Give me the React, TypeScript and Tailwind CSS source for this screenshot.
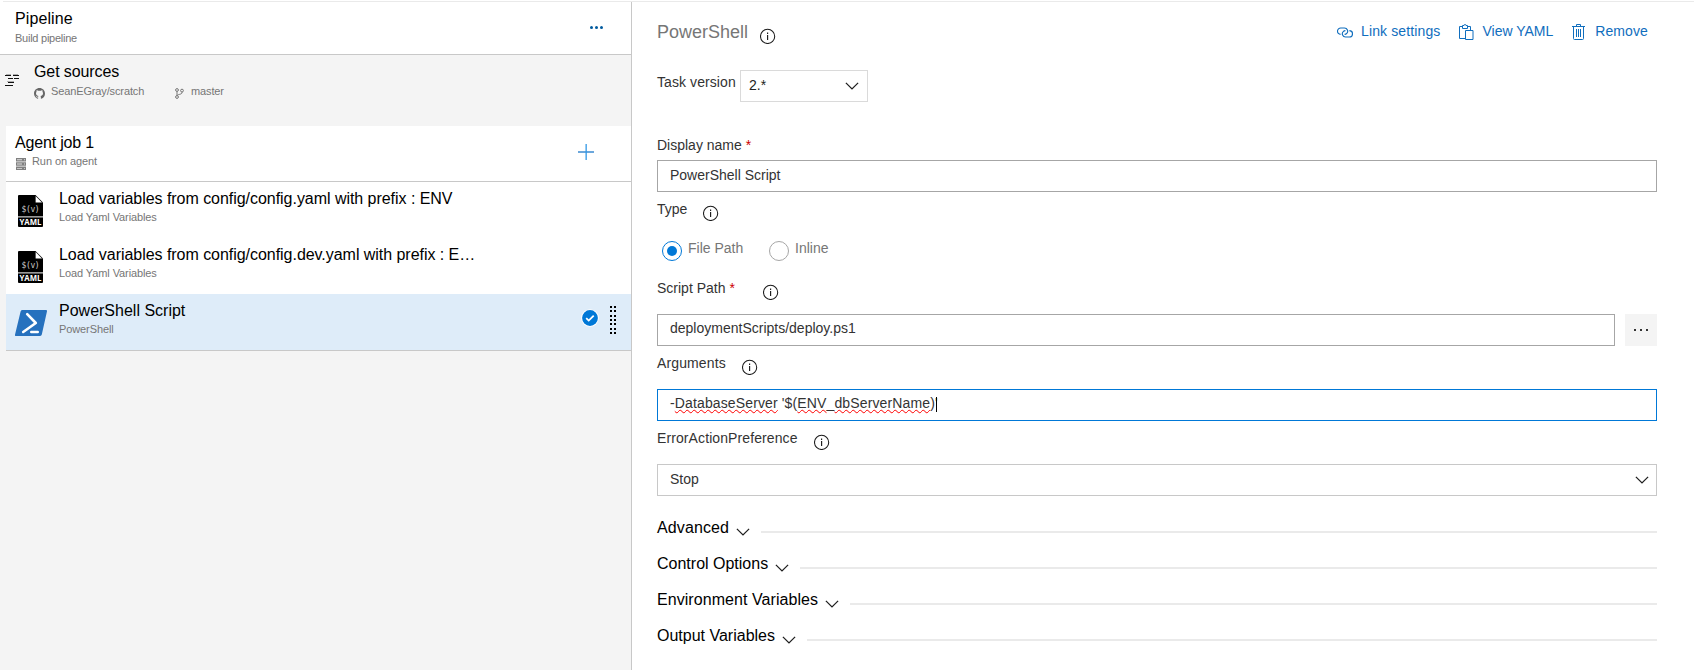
import React from "react";

const InfoIcon = ({ className = "" }: { className?: string }) => (
  <svg className={`h-4 w-4 shrink-0 ${className}`} viewBox="0 0 16 16" fill="none" stroke="#1a1a1a" strokeWidth="1.05">
    <circle cx="7.6" cy="8.4" r="7.1" />
    <path d="M7.600 7v5" strokeWidth="1.15" />
    <path d="M7.600 4.600v1.400" strokeWidth="1.15" />
  </svg>
);

const Chevron = ({ className = "" }: { className?: string }) => (
  <svg className={`h-[8px] w-[14px] shrink-0 ${className}`} viewBox="0 0 14 8" fill="none" stroke="#1f1f1f" strokeWidth="1.3">
    <path d="M0.9 0.9 7 6.9 13.1 0.9" />
  </svg>
);

const SourcesIcon = () => (
  <svg className="mt-[19px] ml-[5px] h-3 w-[14px] shrink-0" viewBox="0 0 14 12" fill="#111">
    <path d="M0 1h6v1H0zM8 1h6v1H8zM3 4h5v1H3zM9 4h5v1H9zM3 8h6v1H3zM0 11h8v1H0z" />
    <path d="M1 0h5v1H1zM8 0h5v1H8zM2 7h7v1H2z" opacity=".3" />
  </svg>
);

const GithubIcon = () => (
  <svg className="mt-[5px] h-[11px] w-[11px] shrink-0" viewBox="0 0 16 16" fill="#666">
    <path d="M8 0C3.58 0 0 3.58 0 8c0 3.54 2.29 6.53 5.47 7.59.4.07.55-.17.55-.38 0-.19-.01-.82-.01-1.49-2.01.37-2.53-.49-2.69-.94-.09-.23-.48-.94-.82-1.13-.28-.15-.68-.52-.01-.53.63-.01 1.08.58 1.23.82.72 1.21 1.87.87 2.33.66.07-.52.28-.87.51-1.07-1.78-.2-3.64-.89-3.64-3.95 0-.87.31-1.59.82-2.15-.08-.2-.36-1.02.08-2.12 0 0 .67-.21 2.2.82.64-.18 1.32-.27 2-.27s1.36.09 2 .27c1.53-1.04 2.2-.82 2.2-.82.44 1.1.16 1.92.08 2.12.51.56.82 1.27.82 2.15 0 3.07-1.87 3.75-3.65 3.95.29.25.54.73.54 1.48 0 1.07-.01 1.93-.01 2.2 0 .21.15.46.55.38A8.01 8.01 0 0 0 16 8c0-4.42-3.58-8-8-8Z" />
  </svg>
);

const BranchIcon = () => (
  <svg className="mt-[5px] h-[11px] w-[9px] shrink-0" viewBox="0 0 9 11" fill="none" stroke="#777" strokeWidth="1">
    <circle cx="2" cy="2" r="1.4" />
    <circle cx="7" cy="2.6" r="1.4" />
    <circle cx="2" cy="9" r="1.4" />
    <path d="M2 3.4v4.2M7 4v.6C7 6 5 6.2 3.6 6.6 2.6 6.9 2.2 7.2 2 7.6" />
  </svg>
);

const ServerIcon = () => (
  <svg className="mt-[5px] ml-px h-3 w-[10px] shrink-0" viewBox="0 0 10 12">
    <path fill="#808080" d="M0 0h10v3.4H0zM0 4.3h10v3.4H0zM0 8.6h10V12H0z" />
    <path fill="#ddd" d="M1 1.3h5v.9H1zM1 5.6h5v.9H1zM1 9.9h5v.9H1zM8 1.3h1v.9H8zM8 5.6h1v.9H8zM8 9.9h1v.9H8z" />
  </svg>
);

const YamlIcon = () => (
  <svg className="mt-[13px] ml-3 h-8 w-[25px] shrink-0" viewBox="0 0 25 32">
    <path fill="#000" d="M1 0h16.5L25 7.5V21H0V1a1 1 0 0 1 1-1Z" />
    <path fill="#fff" d="M17.6 1v6.4H24z" />
    <path fill="#999" d="M0 21h25v1.6H0z" />
    <path fill="#000" d="M0 22.6h25V31a1 1 0 0 1-1 1H1a1 1 0 0 1-1-1z" />
    <text x="12.6" y="16.8" textAnchor="middle" fontSize="8" fill="#ccc" fontFamily="DejaVu Sans Mono, monospace" textLength="18">$(v)</text>
    <text x="12.5" y="30.2" textAnchor="middle" fontSize="8.6" fontWeight="bold" fill="#fff" fontFamily="Open Sans, sans-serif" textLength="22" lengthAdjust="spacingAndGlyphs">YAML</text>
  </svg>
);

const PowerShellIcon = () => (
  <svg className="mt-4 ml-[9px] h-[26px] w-8 shrink-0" viewBox="0 0 32 26">
    <path fill="#2671be" d="M7.6 0H31q1.3 0 1 1.3L26.8 24.6q-.3 1.4-1.7 1.4H1q-1.3 0-1-1.3L5.6 1.4Q6 0 7.6 0Z" />
    <path d="M12.2 4.2 20.8 13 8.2 22" fill="none" stroke="#fff" strokeWidth="2.6" strokeLinecap="round" strokeLinejoin="round" />
    <path d="M16.2 22h6.6" stroke="#fff" strokeWidth="2.4" strokeLinecap="round" />
  </svg>
);

const CheckBadge = () => (
  <svg className="mt-[15px] h-[18px] w-[18px] shrink-0" viewBox="0 0 18 18">
    <circle cx="9" cy="9" r="8.8" fill="#fff" />
    <circle cx="9" cy="9" r="7.9" fill="#0078d7" />
    <path d="m5.2 9.2 2.5 2.4 5-5" fill="none" stroke="#fff" strokeWidth="1.8" />
  </svg>
);

const DragHandle = () => (
  <svg className="mt-3 mr-[14px] ml-[11px] h-7 w-[7px] shrink-0" viewBox="0 0 7 28" fill="#000">
    {[0, 4, 9, 13, 17, 22, 26].map((y) => (
      <g key={y}>
        <rect x="0" y={y} width="2" height="2" />
        <rect x="4" y={y} width="2" height="2" />
      </g>
    ))}
  </svg>
);

const LinkIcon = () => (
  <svg className="mt-[6px] h-[11px] w-4 shrink-0" viewBox="0 0 16 11" fill="none" stroke="#106ebe" strokeWidth="1.15">
    <path d="M3.600 7.400A3.200 3.200 0 0 1 3.800 1h3.700a3.200 3.200 0 0 1 2.300 5.400Q8.900 7.400 7.600 7.400" />
    <path d="M12.400 3.600a3.200 3.200 0 0 1-.2 6.400H8.500a3.200 3.200 0 0 1-2.300-5.400Q7.100 3.600 8.400 3.600" />
  </svg>
);

const ClipboardIcon = () => (
  <svg className="mt-[3px] ml-[19px] h-4 w-[15px] shrink-0" viewBox="0 0 15 16" fill="none" stroke="#106ebe" strokeWidth="1">
    <path d="M6 14.500H.5v-12H3M9 2.500h2.500V6M3.500 4.500v-3h1.500a1 1 0 0 1 2 0h1.500v3z" />
    <path d="M6.500 6.500h7.500v9H6.500z" />
  </svg>
);

const TrashIcon = () => (
  <svg className="mt-[3px] ml-[19px] h-4 w-[13px] shrink-0" viewBox="0 0 13 16" fill="none" stroke="#106ebe" strokeWidth="1">
    <path d="M0 2.500h13M4.500 2.500v-2h4v2M1.500 2.500v12q0 1 1 1h8q1 0 1-1v-12M4.500 5v8M6.500 5v8M8.500 5v8" />
  </svg>
);

const title = "text-[16px] leading-5 whitespace-nowrap text-black";
const sub = "text-[11px] leading-4 whitespace-nowrap text-[#767676]";
const misspelt = "decoration-[#f00] decoration-wavy decoration-1";

function Task({ icon, name, type, selected }: { icon: React.ReactNode; name: string; type: string; selected?: boolean }) {
  return (
    <div className={`flex h-14 ${selected ? "bg-[#deecf9]" : "bg-white"}`}>
      <div className="w-[53px] shrink-0">{icon}</div>
      <div className="w-[420px] pt-[7px]">
        <div className={`${title} ${selected ? "tracking-normal" : "tracking-[-0.04px]"}`}>{name}</div>
        <div className={`${sub} tracking-[-0.1px]`}>{type}</div>
      </div>
      {selected && (
        <div className="ml-auto flex">
          <CheckBadge />
          <DragHandle />
        </div>
      )}
    </div>
  );
}

const Section = ({ name, tracking }: { name: string; tracking: string }) => (
  <div className="flex h-9">
    <span className={`${title} ${tracking}`}>{name}</span>
    <Chevron className="mt-[10px] ml-[7px]" />
    <div className="mt-[13px] ml-[11px] h-[2px] flex-1 bg-[#eaeaea]" />
  </div>
);

export default function App() {
  return (
    <div className="flex h-[670px] w-[1694px] flex-col overflow-hidden bg-white font-['Liberation_Sans',Arial,sans-serif] text-[14px] leading-5 text-[#333]">
      <div className="mt-px ml-[3px] h-px shrink-0 bg-[#eaeaea]" />
      <div className="flex flex-1">
        <aside className="flex w-[632px] shrink-0 flex-col border-r border-[#c8c8c8] bg-[#f4f4f4]">
          <div className="flex h-[53px] justify-between border-b border-[#c8c8c8] bg-white pt-[7px] pl-[15px]">
            <div>
              <div className={`${title} tracking-[0.1px]`}>Pipeline</div>
              <div className={`${sub} mt-px tracking-[-0.25px]`}>Build pipeline</div>
            </div>
            <svg className="mt-[17px] mr-7 h-[3px] w-[13px]" viewBox="0 0 13 3" fill="#005a9e">
              <circle cx="1.500" cy="1.500" r="1.500" />
              <circle cx="6.500" cy="1.500" r="1.500" />
              <circle cx="11.500" cy="1.500" r="1.500" />
            </svg>
          </div>
          <div className="flex h-[71px]">
            <SourcesIcon />
            <div className="ml-[15px] pt-[7px]">
              <div className={`${title} tracking-[-0.1px]`}>Get sources</div>
              <div className={`${sub} mt-px flex tracking-[-0.13px]`}>
                <GithubIcon />
                <span className="ml-[6px] w-[124px]">SeanEGray/scratch</span>
                <BranchIcon />
                <span className="ml-[7px]">master</span>
              </div>
            </div>
          </div>
          <div className="ml-[6px] border-b border-[#c8c8c8]">
            <div className="flex h-14 justify-between border-b border-[#c8c8c8] bg-white pt-[7px] pl-[9px]">
              <div>
                <div className={`${title} tracking-[-0.18px]`}>Agent job 1</div>
                <div className={`${sub} flex tracking-[-0.08px]`}>
                  <ServerIcon />
                  <span className="ml-[6px]">Run on agent</span>
                </div>
              </div>
              <svg className="mt-[11px] mr-[37px] h-4 w-4" viewBox="0 0 16 16">
                <path fill="#6ba7dc" d="M0 7h16v2H0z" />
                <path fill="#3097e5" d="M7.500 0h1.300v16H7.500z" />
              </svg>
            </div>
            <Task icon={<YamlIcon />} name="Load variables from config/config.yaml with prefix : ENV" type="Load Yaml Variables" />
            <Task icon={<YamlIcon />} name="Load variables from config/config.dev.yaml with prefix : E…" type="Load Yaml Variables" />
            <Task icon={<PowerShellIcon />} name="PowerShell Script" type="PowerShell" selected />
          </div>
        </aside>

        <main className="flex w-[1025px] flex-col pl-[25px]">
          <header className="flex h-[68px] justify-between pt-[18px]">
            <div className="flex">
              <h1 className="text-[18px] leading-6 text-[#767676]">PowerShell</h1>
              <InfoIcon className="mt-2 ml-3" />
            </div>
            <div className="mr-[9px] flex pt-px text-[#106ebe]">
              <LinkIcon />
              <span className="ml-2 tracking-[0.12px]">Link settings</span>
              <ClipboardIcon />
              <span className="ml-2">View YAML</span>
              <TrashIcon />
              <span className="ml-[10px] tracking-[0.1px]">Remove</span>
            </div>
          </header>
          <div className="flex h-8">
            <label className="w-[83px] pt-[2px] tracking-[0.08px]">Task version</label>
            <div className="flex w-32 justify-between border border-[#dadada] pt-1 pr-[8px] pl-2">
              <span className="text-[#222]">2.*</span>
              <Chevron className="mt-[7px]" />
            </div>
          </div>
          <div className="flex h-[58px] pt-[33px]">
            <label>Display name</label>
            <span className="ml-1 text-[#c00]">*</span>
          </div>
          <div className="h-8 border border-[#a6a6a6] pt-1 pl-3">PowerShell Script</div>
          <div className="flex h-[46px] pt-[7px]">
            <label>Type</label>
            <InfoIcon className="mt-[6px] ml-4" />
          </div>
          <div className="flex h-10 pl-[5px] text-[#767676]">
            <span className="mt-[3px] flex h-5 w-5 items-center justify-center rounded-full border border-[#0078d7]">
              <span className="h-[10px] w-[10px] rounded-full bg-[#0078d7]" />
            </span>
            <label className="ml-[6px] w-[81px]">File Path</label>
            <span className="mt-[3px] h-5 w-5 rounded-full border border-[#a6a6a6]" />
            <label className="ml-[6px]">Inline</label>
          </div>
          <div className="flex h-9">
            <label>Script Path</label>
            <span className="ml-1 text-[#c00]">*</span>
            <InfoIcon className="mt-[6px] ml-7" />
          </div>
          <div className="flex h-8 gap-[10px]">
            <div className="flex-1 border border-[#a6a6a6] pt-[3px] pl-3">deploymentScripts/deploy.ps1</div>
            <button className="flex w-8 justify-center bg-[#f4f4f4] pt-[15px]">
              <svg className="h-[2px] w-[15px]" viewBox="0 0 15 2" fill="#333">
                <path d="M0 0h2v2H0zM6 0h2v2H6zM12 0h2v2h-2z" />
              </svg>
            </button>
          </div>
          <div className="flex h-[43px] pt-[7px]">
            <label className="tracking-[0.12px]">Arguments</label>
            <InfoIcon className="mt-[6px] ml-4" />
          </div>
          <div className="flex h-8 border border-[#0078d7] pt-[3px] pl-3 whitespace-pre">
            <span className="tracking-[0.13px]">-<u className={misspelt}>DatabaseServer</u> '$(<u className={misspelt}>ENV</u>_<u className={misspelt}>dbServerName</u>)'</span>
            <span className="mt-1 -ml-[2px] h-[15px] w-px bg-black" />
          </div>
          <div className="flex h-[43px] pt-[7px]">
            <label className="tracking-[0.1px]">ErrorActionPreference</label>
            <InfoIcon className="mt-[6px] ml-4" />
          </div>
          <div className="mb-[22px] flex h-8 justify-between border border-[#c8c8c8] pt-1 pr-[7px] pl-3">
            <span>Stop</span>
            <Chevron className="mt-[7px]" />
          </div>
          <Section name="Advanced" tracking="tracking-[0.12px]" />
          <Section name="Control Options" tracking="tracking-normal" />
          <Section name="Environment Variables" tracking="tracking-[0.06px]" />
          <Section name="Output Variables" tracking="tracking-normal" />
        </main>
      </div>
    </div>
  );
}
